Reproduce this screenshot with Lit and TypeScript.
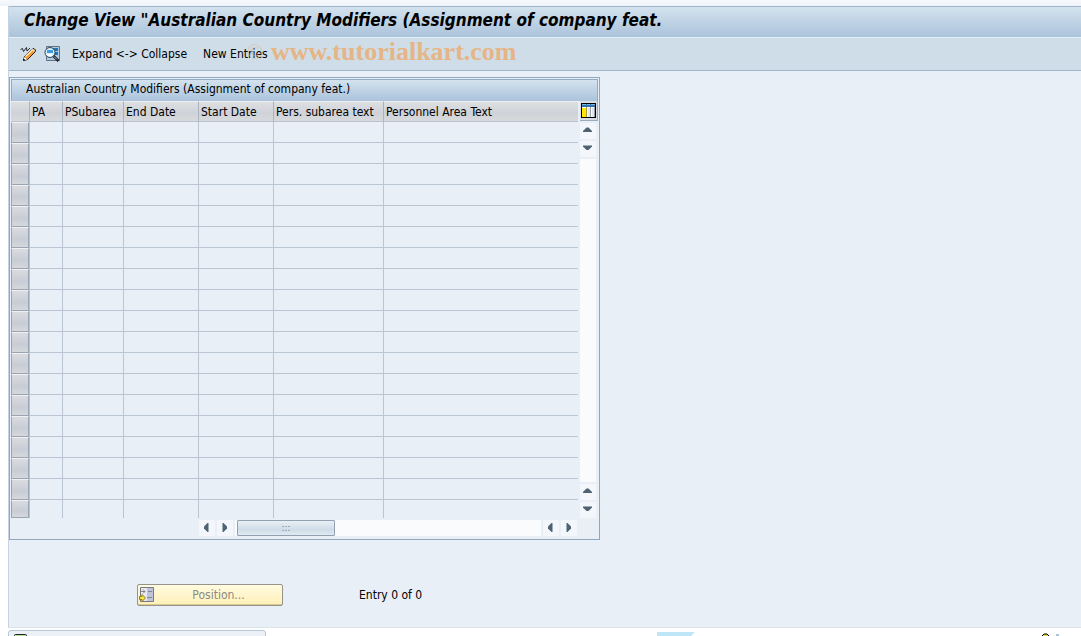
import { LitElement, html, css } from "lit";
import { customElement } from "lit/decorators.js";

interface Column {
  label: string;
  width: number;
}

const columns: Column[] = [
  { label: "PA", width: 33 },
  { label: "PSubarea", width: 61 },
  { label: "End Date", width: 75 },
  { label: "Start Date", width: 75 },
  { label: "Pers. subarea text", width: 110 },
  { label: "Personnel Area Text", width: 194 },
];

const rows = Array.from({ length: 19 }, (_, i) => i + 1);

const arrowPaths: Record<string, string> = {
  up: "M3 9h9V8L8.500 4.500h-2L3 8z",
  down: "M3 4.500h9v1L8.500 9h-2L3 5.500z",
  left: "M9.500 3v9h-1L5 8.500v-2L8.500 3z",
  right: "M5.500 3v9h1L10 8.500v-2L6.500 3z",
};

const arrow = (dir: string) => html`<svg width="16" height="16" viewBox="0 0 16 16">
  <path d=${arrowPaths[dir]} fill="#4e6272" />
</svg>`;

@customElement("app-root")
export class AppRoot extends LitElement {
  static styles = css`
    :host {
      display: flex;
      flex-direction: column;
      height: 100vh;
      overflow: hidden;
      box-sizing: border-box;
      padding: 6px 0 0 8px;
      background: linear-gradient(#f6f8fc, #eef3f9 6px, #fff 6px);
      font-family: "DejaVu Sans Condensed", "DejaVu Sans", sans-serif;
      font-size: 12px;
      color: #000;
    }
    * { box-sizing: border-box; }
    button { font: inherit; color: inherit; margin: 0; padding: 0; border: 0; background: none; }
    svg { display: block; }
    .screen {
      flex: 1;
      min-height: 0;
      overflow: hidden;
      background: #e8eff6;
      border-left: 1px solid #c6d3e2;
      border-bottom: 1px solid #dbe3ec;
    }
    .title {
      margin: 0;
      height: 31px;
      padding-left: 15px;
      border-top: 1px solid #a3b5ca;
      background: linear-gradient(#d3e2ee, #abc3db);
      font-size: 17px;
      line-height: 26px;
      font-weight: bold;
      font-style: italic;
      white-space: nowrap;
    }
    .toolbar {
      position: relative;
      display: flex;
      align-items: center;
      height: 34px;
      padding-left: 11px;
      background: #cfdde8;
      border-top: 1px solid #e6eef5;
      border-bottom: 1px solid #a3b5ca;
      white-space: nowrap;
    }
    .icon { margin-right: 8px; }
    .link { margin-left: 4px; margin-right: 12px; }
    .mark {
      position: absolute;
      left: 238px;
      top: 0;
      display: flex;
      align-items: center;
      gap: 8px;
      font: bold 26px/28px "Liberation Serif", serif;
      color: #e5b586;
      pointer-events: none;
    }
    .copy { font-weight: normal; font-size: 21px; opacity: 0.6; }
    .panel {
      width: 591px;
      max-width: 100%;
      margin-top: 6px;
      padding: 1px;
      border: 1px solid #8fa7bf;
      background: #e8eff6;
    }
    .caption {
      margin: 0;
      height: 22px;
      padding-left: 14px;
      border: 1px solid #93aac2;
      border-bottom: 0;
      background: linear-gradient(#d3e2ee, #abc3db);
      font-size: 12px;
      font-weight: normal;
      line-height: 18px;
    }
    .body { display: flex; }
    table { border-collapse: separate; border-spacing: 0; table-layout: fixed; width: 567px; }
    th {
      height: 21px;
      padding: 0 0 0 2px;
      text-align: left;
      font-weight: normal;
      white-space: nowrap;
      border-right: 1px solid #a9b2bf;
      border-bottom: 1px solid #b9c3d0;
      border-top: 1px solid #eceef0;
      background: linear-gradient(#dddfe2, #cfd2d8 60%, #d8dadd);
    }
    td { height: 21px; padding: 0; border-right: 1px solid #bac5d4; border-bottom: 1px solid #bac5d4; }
    th:last-child, td:last-child { border-right: 0; }
    tr:last-child td { height: 18px; border-bottom: 0; }
    td.pick { border: 0; }
    .pick-col { width: 19px; }
    .selector {
      display: block;
      width: 18px;
      height: 21px;
      border: 1px solid #9aa4b2;
      border-top-color: #eef0f3;
      box-shadow: 1px 0 #b9c3d0;
      background: linear-gradient(#d9dbdf, #c8ccd5 60%, #d5d8dc);
    }
    tr:last-child .selector { height: 18px; }
    .side { flex: 1; display: flex; flex-direction: column; gap: 2px; padding-left: 2px; }
    .config {
      width: 18px;
      height: 20px;
      padding: 1px;
      border-right: 1px solid #9aabbd;
      border-bottom: 1px solid #9aabbd;
      background: #d9dde1;
    }
    .arrow { flex: none; width: 16px; height: 16px; background: #f3f6fa; }
    .vtrack { flex: 1; width: 16px; background: #fafbfc; }
    .hscroll { display: flex; gap: 2px; height: 20px; padding: 2px 0 0 188px; }
    .htrack { width: 306px; height: 16px; padding-left: 2px; background: #fafbfc; }
    .thumb {
      display: grid;
      place-items: center;
      width: 98px;
      height: 16px;
      border: 1px solid #92a1b1;
      border-radius: 1px;
      background: linear-gradient(#e9f0f6, #cfdde8 60%, #dfe9f1);
    }
    .entry { display: flex; align-items: center; gap: 76px; padding: 44px 0 0 128px; }
    .position {
      display: flex;
      align-items: center;
      width: 146px;
      height: 22px;
      padding-left: 1px;
      border: 1px solid #96938c;
      border-radius: 2px;
      box-shadow: inset 0 -1px #d9c98c;
      background: linear-gradient(#fffbe0, #fff0b8);
      color: #8b8b84;
    }
    .position span { flex: 1; text-align: center; }
    .status { flex: none; display: flex; height: 8px; padding-top: 2px; }
    .message {
      width: 258px;
      height: 20px;
      padding: 2px 0 0 4px;
      border: 1px solid #b6c6d8;
      border-radius: 3px;
      background: #ecf1f7;
    }
    .logo { margin: 2px 0 0 391px; }
    .lock { margin: 3px 16px 0 auto; }
  `;

  render() {
    return html`
      <main class="screen">
        <h1 class="title">Change View "Australian Country Modifiers (Assignment of company feat.</h1>
        <div class="toolbar">
          <button class="icon" aria-label="Display or change">${this.pencil()}</button>
          <button class="icon" aria-label="Details">${this.lens()}</button>
          <button class="link">Expand &lt;-&gt; Collapse</button>
          <button class="link">New Entries</button>
          <div class="mark"><span class="copy">©</span><span>www.tutorialkart.com</span></div>
        </div>
        <section class="panel">
          <h2 class="caption">Australian Country Modifiers (Assignment of company feat.)</h2>
          <div class="body">
            <table>
              <colgroup>
                <col class="pick-col" />
                ${columns.map((c) => html`<col style="width:${c.width}px" />`)}
              </colgroup>
              <thead>
                <tr><th></th>${columns.map((c) => html`<th scope="col">${c.label}</th>`)}</tr>
              </thead>
              <tbody>
                ${rows.map((n) => html`<tr>
                  <td class="pick"><button class="selector" aria-label="Select row ${n}"></button></td>
                  ${columns.map(() => html`<td></td>`)}
                </tr>`)}
              </tbody>
            </table>
            <div class="side">
              <button class="config" aria-label="Table settings">${this.grid()}</button>
              <button class="arrow" aria-label="Scroll up">${arrow("up")}</button>
              <button class="arrow" aria-label="Scroll down">${arrow("down")}</button>
              <div class="vtrack"></div>
              <button class="arrow" aria-label="Previous row">${arrow("up")}</button>
              <button class="arrow" aria-label="Next row">${arrow("down")}</button>
            </div>
          </div>
          <div class="hscroll">
            <button class="arrow" aria-label="Scroll left">${arrow("left")}</button>
            <button class="arrow" aria-label="Scroll right">${arrow("right")}</button>
            <div class="htrack"><button class="thumb" aria-label="Scroll handle">${this.grip()}</button></div>
            <button class="arrow" aria-label="Previous column">${arrow("left")}</button>
            <button class="arrow" aria-label="Next column">${arrow("right")}</button>
          </div>
        </section>
        <div class="entry">
          <button class="position">${this.positionIcon()}<span>Position...</span></button>
          <div>Entry 0 of 0</div>
        </div>
      </main>
      <footer class="status">
        <div class="message">
          <svg width="16" height="14"><rect x="1.500" y="1.500" width="12" height="12" rx="1" fill="#b6e08a" stroke="#223" /></svg>
        </div>
        <svg class="logo" width="38" height="16"><path d="M0 0h38L22 16H0z" fill="#bfe6f6" /></svg>
        <svg class="lock" width="24" height="12"><path d="M1 6V3L3 1h3l2 2v3" fill="#e8d840" stroke="#000" /><path d="M15 2h3" stroke="#5b86b0" /></svg>
      </footer>
    `;
  }

  private pencil() {
    return html`<svg width="16" height="16" viewBox="0 0 16 16">
      <path d="M3.500 14.500l1-4 8-7.500 1.500-.5 1.500 1.500-.5 2-7.500 7.500z" fill="#f79a28" stroke="#2a1c10" />
      <path d="M5.500 10.500l7-6.500" stroke="#ffe9b0" stroke-width="1.500" />
      <path d="M4 11l3 2.500-3 .7z" fill="#fff" />
      <path d="M3 15l.6-2.500 2 1.700z" fill="#111" />
      <path d="M12 3l2.500 2.500" stroke="#d8d8e4" stroke-width="1.500" />
      <path d="M.5 3.500l2-1 1 3 3-4 .5 3.500L10 2" fill="none" stroke="#26262c" />
    </svg>`;
  }

  private lens() {
    return html`<svg width="16" height="16" viewBox="0 0 16 16">
      <path d="M2.500.5h13v14h-13z" fill="#b3c9dd" stroke="#5f7389" />
      <path d="M8 2h6v3H8zM10 6h4v3h-4z" fill="#1f73b7" />
      <circle cx="6" cy="6.500" r="5" fill="#d5effd" stroke="#33475c" />
      <path d="M3 4h6v3H3z" fill="#3f9be0" />
      <path d="M3 8h5v2H4z" fill="#fff" />
      <path d="M9.500 10l5 5" stroke="#1c1c24" stroke-width="2.500" />
      <path d="M10 10.500l3 3" stroke="#aebccb" />
    </svg>`;
  }

  private grid() {
    return html`<svg width="15" height="15" viewBox="0 0 15 15" shape-rendering="crispEdges">
      <path d="M0 0h15v15H0z" fill="#000" />
      <path d="M1 1h13v13H1z" fill="#fff" />
      <path d="M1 1h13v3H1z" fill="#2f74b0" />
      <path d="M1 1h4v1H1zM6 1h3v1H6zM10 1h4v1h-4z" fill="#7fb4de" />
      <path d="M1 5h4v9H1z" fill="#ffe600" />
      <path d="M5 4h1v10H5z" fill="#a89c30" />
      <path d="M9 4h1v10H9zM13 4h1v10h-1z" fill="#9a9fa8" />
      <path d="M7 5h2v9H7zM11 5h2v9h-2z" fill="#e3e5ea" />
    </svg>`;
  }

  private grip() {
    return html`<svg width="9" height="6" shape-rendering="crispEdges">
      <path d="M0 1h2M3 1h2M6 1h2M0 5h2M3 5h2M6 5h2" stroke="#9dacba" />
    </svg>`;
  }

  private positionIcon() {
    return html`<svg width="16" height="16" viewBox="0 0 16 16">
      <path d="M1.500.5h13v14h-13z" fill="#e9ebf1" stroke="#787880" />
      <path d="M8 1h6v13H8z" fill="#bfc3dc" />
      <path d="M2 4.500h4M4 2.500l2 2-2 2M9 4.500h4M8 10.500h5" fill="none" stroke="#85858f" />
      <path d="M.5 9.500h2.500v-2l3.500 3.500L3 14.500v-2H.5z" fill="#f8e63c" stroke="#8a7d3a" />
    </svg>`;
  }
}
